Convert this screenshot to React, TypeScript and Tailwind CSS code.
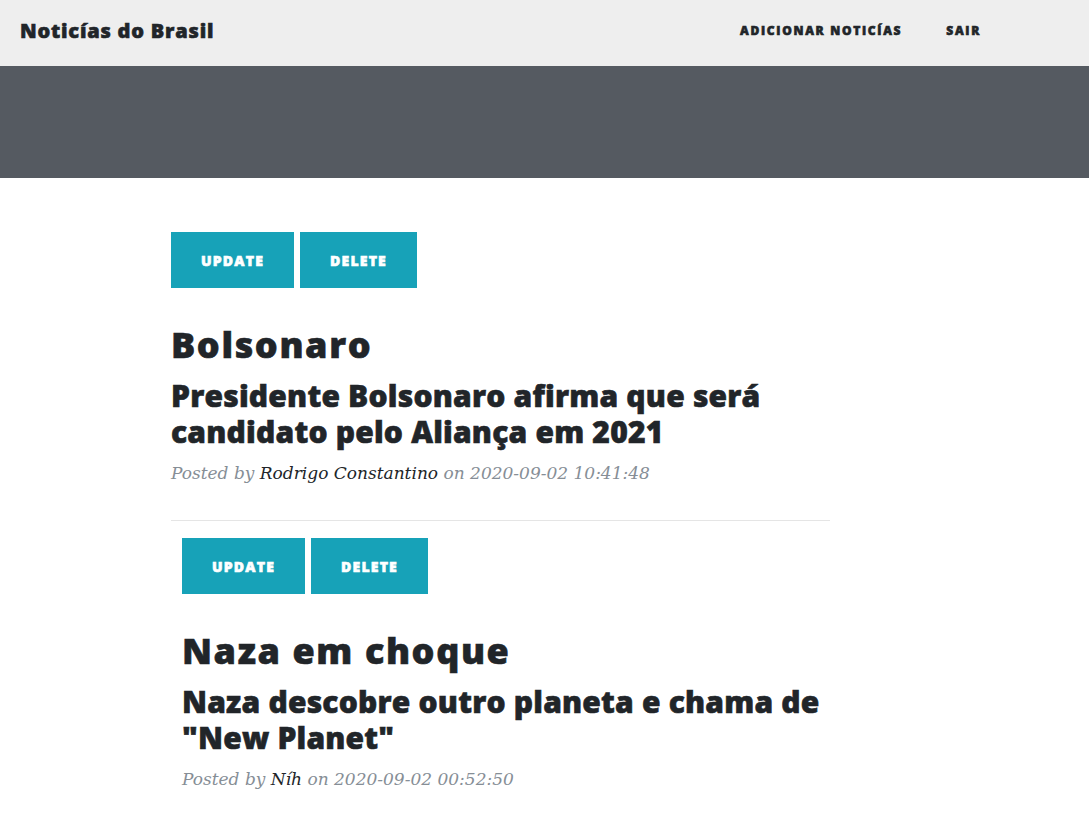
import React from "react";

interface Post {
  id: number;
  title: string;
  subtitle: string;
  author: string;
  date: string;
}

const posts: Post[] = [
  {
    id: 1,
    title: "Bolsonaro",
    subtitle: "Presidente Bolsonaro afirma que será candidato pelo Aliança em 2021",
    author: "Rodrigo Constantino",
    date: "2020-09-02 10:41:48",
  },
  {
    id: 2,
    title: "Naza em choque",
    subtitle: 'Naza descobre outro planeta e chama de "New Planet"',
    author: "Níh",
    date: "2020-09-02 00:52:50",
  },
];

// Open Sans only ships bold here, so thicken it a bit to get the 800 look
const heavy = "font-['Open_Sans',sans-serif] font-extrabold [-webkit-text-stroke:0.6px_currentColor]";
const btn = `h-[56px] px-[30px] bg-[#17a2b8] text-white text-[14px] tracking-[1.2px] uppercase ${heavy}`;

const PostPreview = ({ post }: { post: Post }) => (
  <div>
    <div className="flex gap-[6px]">
      <button className={btn}>Update</button>
      <button className={btn}>Delete</button>
    </div>
    <h2 className={`${heavy} mt-[35px] text-[36px] leading-[1.2] tracking-[1.6px] text-[#212529]`}>{post.title}</h2>
    <h3 className={`${heavy} mt-[12px] text-[30px] leading-[1.2] tracking-[0.2px] text-[#212529]`}>{post.subtitle}</h3>
    <p className="mt-[10px] text-[17px] leading-[27px] italic font-['DejaVu_Serif',serif] text-[#868e96]">
      Posted by <span className="text-[#212529]">{post.author}</span> on {post.date}
    </p>
  </div>
);

export default function App() {
  return (
    <div className="min-h-screen bg-white">
      <nav className="h-[66px] bg-[#eeeeee] flex items-center pb-[5px] pl-[20px] pr-[108px]">
        <span className={`${heavy} text-[20px] tracking-[0.8px] text-[#212529]`}>Noticías do Brasil</span>
        <ul className="ml-auto flex gap-[44px]">
          <li className={`${heavy} text-[12px] tracking-[1.7px] uppercase text-[#212529]`}>Adicionar Noticías</li>
          <li className={`${heavy} text-[12px] tracking-[1.7px] uppercase text-[#212529]`}>Sair</li>
        </ul>
      </nav>
      <header className="h-[112px] bg-[#555a61]" />
      <main className="w-[659px] ml-[171px] pt-[54px]">
        <PostPreview post={posts[0]} />
        <hr className="mt-[33px] border-t border-[#e5e5e5]" />
        <div className="pl-[11px] pt-[17px]">
          <PostPreview post={posts[1]} />
        </div>
      </main>
    </div>
  );
}
